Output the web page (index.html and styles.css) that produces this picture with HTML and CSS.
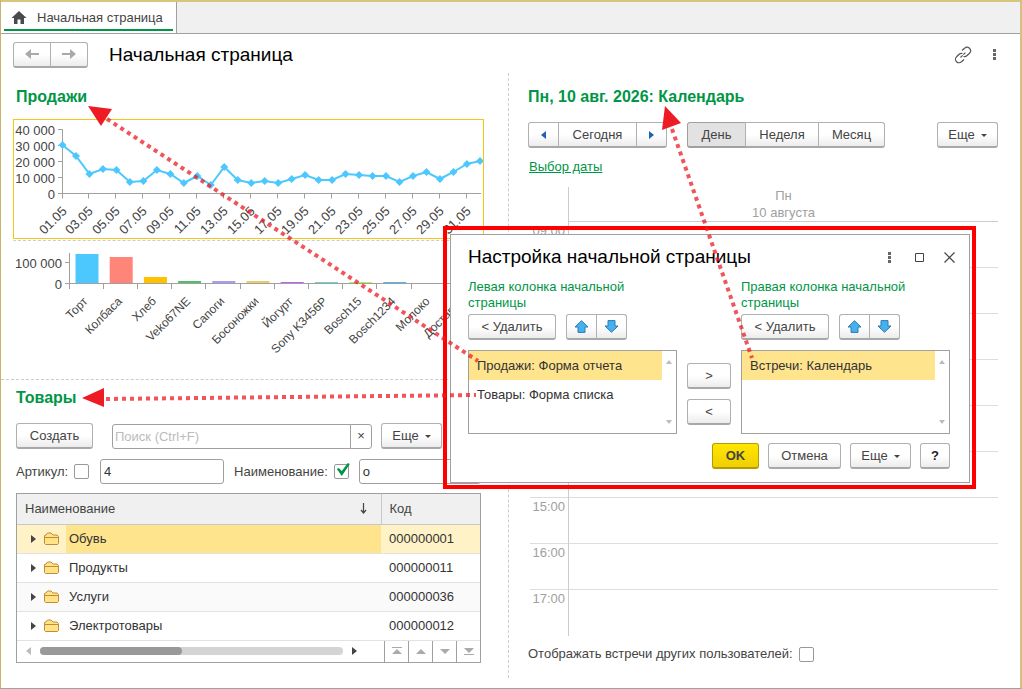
FILE: index.html
```html
<!DOCTYPE html>
<html lang="ru">
<head>
  <meta charset="UTF-8" />
  <title>Начальная страница</title>
  <link rel="stylesheet" href="styles.css">
</head>
<body>
  <div class="tabs">
    <a class="tab" href="#">
      <svg width="16" height="14" viewBox="0 0 16 14"><path fill="#4a4a4a" d="M8 0 L15.5 7 H13 V13 H9.500 V8.500 H6.500 V13 H3 V7 H0.500 Z"/></svg>
      Начальная страница
    </a>
  </div>

  <header class="header">
    <div class="group">
      <button class="btn nav" aria-label="Назад"><svg width="16" height="12" viewBox="0 0 16 12"><path fill="#a9a9a9" d="M1 6 L7 1 V5 H15 V7 H7 V11 Z"/></svg></button>
      <button class="btn nav" aria-label="Вперед"><svg width="16" height="12" viewBox="0 0 16 12"><path fill="#a9a9a9" d="M15 6 L9 1 V5 H1 V7 H9 V11 Z"/></svg></button>
    </div>
    <h1>Начальная страница</h1>
    <button class="icon" aria-label="Ссылка">
      <svg width="18" height="18" viewBox="0 0 18 18" fill="none" stroke="#555" stroke-width="1.200">
        <path d="M8 4.500 L10.500 2.300 A3.400 3.400 0 0 1 15.500 7.200 L12.800 9.800 A3.300 3.300 0 0 1 9.500 10.500"/>
        <path d="M10 13.500 L7.500 15.700 A3.400 3.400 0 0 1 2.500 10.800 L5.200 8.200 A3.300 3.300 0 0 1 8.500 7.500"/>
        <path d="M6.500 11.500 L11.500 6.500" stroke-dasharray="3 1"/>
      </svg>
    </button>
    <button class="icon dots" aria-label="Меню"><svg width="3" height="11"><path fill="#666" d="M0 0h3v3H0zM0 4h3v3H0zM0 8h3v3H0z"/></svg></button>
  </header>

  <main class="columns">
    <div class="left">
      <section class="sales">
        <h2>Продажи</h2>
        <svg id="lineChart" class="chart line"></svg>
        <svg id="barChart" class="chart bars"></svg>
      </section>

      <section class="goods">
        <h2>Товары</h2>
        <div class="toolbar">
          <button class="btn create">Создать</button>
          <div class="search">
            <input type="text" placeholder="Поиск (Ctrl+F)" aria-label="Поиск" />
            <button aria-label="Очистить">×</button>
          </div>
          <button class="btn more">Еще <i class="caret"></i></button>
        </div>
        <div class="filters">
          <label for="useArticle">Артикул:</label>
          <input type="checkbox" id="useArticle" />
          <input type="text" class="article" value="4" aria-label="Значение артикула" />
          <label for="useName">Наименование:</label>
          <input type="checkbox" id="useName" checked />
          <input type="text" class="title" value="о" aria-label="Значение наименования" />
        </div>
        <div class="grid">
          <table>
            <thead>
              <tr><th>Наименование <svg class="sort" width="7" height="11" viewBox="0 0 7 11"><path d="M3.500 0 V10 M1 7 L3.500 10 L6 7" fill="none" stroke="#444" stroke-width="1.200"/></svg></th><th>Код</th></tr>
            </thead>
            <tbody id="goodsRows"></tbody>
          </table>
          <div class="scroll">
            <i class="tri lt"></i>
            <div class="track"><div class="thumb"></div></div>
            <i class="tri rt"></i>
            <div class="pager">
              <button aria-label="В начало"><svg width="10" height="8"><path fill="#aaa" d="M0 0h10v1H0zM5 2l5 5H0z"/></svg></button>
              <button aria-label="Вверх"><svg width="10" height="8"><path fill="#aaa" d="M5 2l5 5H0z"/></svg></button>
              <button aria-label="Вниз"><svg width="10" height="8"><path fill="#aaa" d="M0 2h10l-5 5z"/></svg></button>
              <button aria-label="В конец"><svg width="10" height="8"><path fill="#aaa" d="M0 1h10l-5 5zM0 7h10v1H0z"/></svg></button>
            </div>
          </div>
        </div>
      </section>
    </div>

    <section class="right">
      <h2>Пн, 10 авг. 2026: Календарь</h2>
      <div class="toolbar">
        <div class="group">
          <button class="btn step" aria-label="Предыдущий день"><i class="tri lt"></i></button>
          <button class="btn today">Сегодня</button>
          <button class="btn step" aria-label="Следующий день"><i class="tri rt"></i></button>
        </div>
        <div class="group period">
          <button class="btn pressed">День</button>
          <button class="btn">Неделя</button>
          <button class="btn">Месяц</button>
        </div>
        <button class="btn more">Еще <i class="caret"></i></button>
      </div>
      <a class="pick" href="#">Выбор даты</a>
      <div class="calendar">
        <div class="day"><span>Пн</span><span>10 августа</span></div>
        <div class="hour"><span>09:00</span></div>
        <div class="hour"><span>10:00</span></div>
        <div class="hour"><span>11:00</span></div>
        <div class="hour"><span>12:00</span></div>
        <div class="hour"><span>13:00</span></div>
        <div class="hour"><span>14:00</span></div>
        <div class="hour"><span>15:00</span></div>
        <div class="hour"><span>16:00</span></div>
        <div class="hour"><span>17:00</span></div>
      </div>
      <div class="others">
        <label for="others">Отображать встречи других пользователей:</label>
        <input type="checkbox" id="others" />
      </div>
    </section>
  </main>

  <div class="frame">
    <div class="dialog" role="dialog" aria-labelledby="dialogTitle">
      <div class="dialog-head">
        <h3 id="dialogTitle">Настройка начальной страницы</h3>
        <button class="icon" aria-label="Меню"><svg width="3" height="11"><path fill="#666" d="M0 0h3v3H0zM0 4h3v3H0zM0 8h3v3H0z"/></svg></button>
        <button class="icon" aria-label="Развернуть"><svg width="9" height="9"><path fill="none" stroke="#444" d="M.5 .5h8v8h-8z"/></svg></button>
        <button class="icon" aria-label="Закрыть"><svg width="11" height="11"><path fill="none" stroke="#444" stroke-width="1.200" d="M.5 .5l10 10M10.500 .5l-10 10"/></svg></button>
      </div>
      <div class="lists">
        <div class="list-col">
          <p>Левая колонка начальной страницы</p>
          <div class="toolbar">
            <button class="btn remove">&lt; Удалить</button>
            <div class="group">
              <button class="btn move" aria-label="Выше"><svg width="15" height="13" viewBox="0 0 15 13"><path fill="#47b0ee" stroke="#2b7cb5" d="M7.500 .7 L14 7 H11 V12.400 H4 V7 H1 Z"/></svg></button>
              <button class="btn move" aria-label="Ниже"><svg width="15" height="13" viewBox="0 0 15 13"><path fill="#47b0ee" stroke="#2b7cb5" d="M7.500 12.300 L14 6 H11 V.6 H4 V6 H1 Z"/></svg></button>
            </div>
          </div>
          <ul class="list">
            <li class="selected">Продажи: Форма отчета</li>
            <li>Товары: Форма списка</li>
          </ul>
        </div>
        <div class="transfer">
          <button class="btn">&gt;</button>
          <button class="btn">&lt;</button>
        </div>
        <div class="list-col">
          <p>Правая колонка начальной страницы</p>
          <div class="toolbar">
            <button class="btn remove">&lt; Удалить</button>
            <div class="group">
              <button class="btn move" aria-label="Выше"><svg width="15" height="13" viewBox="0 0 15 13"><path fill="#47b0ee" stroke="#2b7cb5" d="M7.500 .7 L14 7 H11 V12.400 H4 V7 H1 Z"/></svg></button>
              <button class="btn move" aria-label="Ниже"><svg width="15" height="13" viewBox="0 0 15 13"><path fill="#47b0ee" stroke="#2b7cb5" d="M7.500 12.300 L14 6 H11 V.6 H4 V6 H1 Z"/></svg></button>
            </div>
          </div>
          <ul class="list">
            <li class="selected">Встречи: Календарь</li>
          </ul>
        </div>
      </div>
      <div class="dialog-foot">
        <button class="btn ok">OK</button>
        <button class="btn cancel">Отмена</button>
        <button class="btn more">Еще <i class="caret"></i></button>
        <button class="btn help">?</button>
      </div>
    </div>
  </div>

  <svg class="arrows" width="1022" height="689">
    <g stroke="#ed1c24" stroke-width="4" stroke-dasharray="4 4" opacity="0.750">
      <path d="M107 119 L478 361"/>
      <path d="M106 399 L476 395"/>
      <path d="M672 129 L752 358"/>
    </g>
    <g fill="#ed1c24">
      <path d="M88 106 L112 109 L101 126 Z"/>
      <path d="M82 398 L104 388 V407 Z"/>
      <path d="M665 106 L681 123 L662 130 Z"/>
    </g>
  </svg>

  <script>
    function el(parent, name, attrs, text) {
      const node = document.createElementNS("http://www.w3.org/2000/svg", name);
      for (const key in attrs) node.setAttribute(key, attrs[key]);
      if (text) node.textContent = text;
      parent.appendChild(node);
      return node;
    }

    // продажи по дням, y в координатах графика
    const days = [25, 36, 54, 49, 50, 62, 61, 50, 54, 63, 56, 65, 47, 60, 63, 61,
      63, 59, 55, 60, 60, 54, 55, 56, 56, 62, 56, 52, 59, 52, 44, 41];

    function drawLine() {
      const svg = document.getElementById("lineChart");
      const left = 48.5, step = 13.48, base = 73.5;
      el(svg, "path", { class: "axis", d: "M48.5 9 V78 M44 73.5 H467" });
      ["40 000", "30 000", "20 000", "10 000", "0"].forEach((label, i) => {
        const y = 9.5 + i * 16;
        el(svg, "path", { class: "axis", d: `M44 ${y} H48` });
        el(svg, "text", { x: 41, y: y + 5, "text-anchor": "end" }, label);
      });
      for (let i = 0; i < 16; i++) {
        const x = Math.round(left + i * 2 * step) - 0.5;
        const label = String(i * 2 + 1).padStart(2, "0") + ".05";
        el(svg, "path", { class: "axis", d: `M${x} ${base} v5` });
        el(svg, "text", { "text-anchor": "end", transform: `translate(${x + 5} 92) rotate(-45)` }, label);
      }
      const points = days.map((y, i) => [Math.min(left + i * step, 466), y]);
      el(svg, "polyline", { class: "series", points: points.join(" ") });
      points.forEach(([x, y]) => el(svg, "path", { fill: "#4dc8ff", d: `M${x} ${y - 4} l4 4 l-4 4 l-4 -4 z` }));
    }

    const products = [
      ["Торт", 29, "#4dc8ff"], ["Колбаса", 26, "#ff8578"], ["Хлеб", 6, "#ffc000"],
      ["Veko67NE", 2, "#4fc068"], ["Сапоги", 2, "#a39df5"], ["Босоножки", 2, "#edcb6b"],
      ["Йогурт", 1, "#c45cff"], ["Sony K3456P", 1, "#6ed3c4"], ["Bosch15", 1, "#b6f25c"],
      ["Bosch1234", 1, "#55b2f0"], ["Молоко", 0, "#ffffff"], ["Доставка", 0, "#ffffff"]
    ];

    function drawBars() {
      const svg = document.getElementById("barChart");
      const step = 34.2;
      el(svg, "path", { class: "axis", d: "M55.5 12 V47 M51 42.5 H467 M51 21.5 H55" });
      el(svg, "text", { x: 48, y: 27, "text-anchor": "end" }, "100 000");
      el(svg, "text", { x: 48, y: 48, "text-anchor": "end" }, "0");
      products.forEach(([name, h, color], i) => {
        const x = 55.5 + i * step;
        if (h) el(svg, "rect", { x: x + 6, y: 42 - h, width: 23, height: h, fill: color });
        el(svg, "path", { class: "axis", d: `M${Math.round(x) - 0.5} 43 v5` });
        el(svg, "text", { class: "name", "text-anchor": "end", transform: `translate(${x + 19} 61) rotate(-45)` }, name);
      });
    }

    const goods = [["Обувь", "000000001"], ["Продукты", "000000011"], ["Услуги", "000000036"], ["Электротовары", "000000012"]];
    const folder = '<svg class="folder" width="15" height="13" viewBox="0 0 15 13"><path fill="#ffe387" stroke="#c48a3a" d="M.5 11.5 V3.500 L2 3 L3.500 1 H7 L9 3 H13 L14.500 4.500 V11.500 L13.500 12.500 H1.500 Z"/><path fill="#f8d56f" stroke="#c48a3a" d="M.5 5.500 H14.500"/></svg>';
    document.getElementById("goodsRows").innerHTML = goods.map(([name, code], i) =>
      `<tr class="${i ? "" : "selected"}"><td><div class="cell"><span class="mark"><i class="tri rt"></i>${folder}</span><span class="text">${name}</span></div></td><td>${code}</td></tr>`
    ).join("");

    drawLine();
    drawBars();
  </script>
</body>
</html>
```
FILE: styles.css
```css
* {
  box-sizing: border-box;
}
body {
  margin: 0;
  min-height: 100vh;
  position: relative;
  display: flex;
  flex-direction: column;
  font: 13px/16px "Liberation Sans", Arial, sans-serif;
  color: #444;
  background: #fff;
  border-left: 1px solid #c8b46a;
  border-right: 2px solid #d3c27e;
  border-bottom: 1px solid #a0a0a0;
}
h1, h2, h3, p, ul {
  margin: 0;
  padding: 0;
}
button, input {
  font: inherit;
  color: inherit;
}
svg {
  display: block;
}

/* вкладки */
.tabs {
  height: 34px;
  background: #f0f0f0;
  border-top: 2px solid #d8c67c;
  border-bottom: 1px solid #a0a0a0;
  display: flex;
}
.tab {
  position: relative;
  display: flex;
  align-items: center;
  gap: 10px;
  padding: 0 13px 0 10px;
  background: #fff;
  border-right: 1px solid #a0a0a0;
  color: #444;
  text-decoration: none;
}
.tab::after {
  content: "";
  position: absolute;
  left: 3px;
  right: 3px;
  bottom: 2px;
  height: 2px;
  background: #009646;
}

.header {
  display: flex;
  align-items: center;
  height: 39px;
  padding: 2px 20px 0 12px;
}
h1, h3 {
  flex: 1;
  font-weight: normal;
  color: #000;
}
h1 {
  font-size: 19px;
  line-height: 24px;
  padding-left: 21px;
}
h2 {
  font-size: 16px;
  line-height: 22px;
  color: #009646;
}
.icon {
  display: flex;
  align-items: center;
  justify-content: center;
  width: 30px;
  height: 24px;
  padding: 0;
  border: 0;
  background: none;
}
.header .dots {
  width: 12px;
  margin-left: 10px;
}

/* кнопки */
.btn {
  height: 26px;
  padding: 0;
  display: inline-flex;
  align-items: center;
  justify-content: center;
  border: 1px solid #b0b0b0;
  border-bottom: 2px solid #a8a8a8;
  border-radius: 3px;
  background: linear-gradient(#fff 50%, #ececec);
}
.group {
  display: flex;
}
.group .btn {
  border-radius: 0;
}
.group .btn + .btn {
  margin-left: -1px;
}
.group .btn:first-child {
  border-radius: 3px 0 0 3px;
}
.group .btn:last-child {
  border-radius: 0 3px 3px 0;
}
.nav {
  width: 38px;
}
.more {
  width: 61px;
}
.caret {
  margin: 2px 0 0 6px;
  border: 3px solid transparent;
  border-top-color: #444;
  border-bottom: 0;
}
.tri {
  width: 0;
  height: 0;
  border: 4px solid transparent;
}
.tri.lt {
  border-right: 5px solid #bbb;
  border-left: 0;
}
.tri.rt {
  border-left: 5px solid #444;
  border-right: 0;
}
.toolbar {
  display: flex;
  align-items: center;
}

.columns {
  flex: 1;
  display: grid;
  grid-template-columns: minmax(0, 508fr) minmax(0, 511fr);
}
.left {
  border-right: 1px dashed #ccc;
  margin-bottom: 10px;
}

/* продажи */
.sales {
  padding: 13px 24px 0 12px;
  border-bottom: 1px dashed #ccc;
}
.sales h2 {
  padding-left: 3px;
}
.chart {
  width: 100%;
  overflow: hidden;
  font-size: 13px;
}
.chart text {
  fill: #444;
}
.chart .name {
  font-size: 12px;
}
.line {
  height: 120px;
  margin-top: 11px;
  border: 1px solid #f5c518;
}
.bars {
  height: 139px;
  margin-top: 1px;
  border-top: 1px dashed #ccc;
  border-left: 1px solid transparent;
}
.axis {
  fill: none;
  stroke: #a0a0a0;
}
.series {
  fill: none;
  stroke: #4dc8ff;
  stroke-width: 2;
}

/* товары */
.goods {
  padding: 7px 27px 0 15px;
}
.goods .toolbar {
  margin-top: 14px;
}
.create {
  width: 77px;
}
input[type="text"] {
  height: 25px;
  min-width: 0;
  padding: 0 3px;
  border: 1px solid #a0a0a0;
  border-radius: 3px;
  background: #fff;
  color: #333;
}
input::placeholder {
  color: #bbb;
}
.search {
  display: flex;
  width: 260px;
  margin: 0 9px 0 19px;
}
.search input[type="text"] {
  flex: 1;
  padding: 0 2px;
  border-radius: 3px 0 0 3px;
}
.search button {
  width: 22px;
  margin-left: -1px;
  padding: 0;
  border: 1px solid #a0a0a0;
  border-radius: 0 3px 3px 0;
  background: #fff;
}
.filters {
  display: flex;
  align-items: center;
  margin: 10px 0 9px;
}
input[type="checkbox"] {
  appearance: none;
  flex: none;
  position: relative;
  width: 15px;
  height: 15px;
  margin: 0 0 0 6px;
  border: 1px solid #999;
  border-radius: 2px;
  background: #fff;
}
input[type="checkbox"]:checked::before {
  content: "";
  position: absolute;
  left: 1px;
  top: -2px;
  width: 15px;
  height: 13px;
  background: #009646;
  clip-path: polygon(1px 6px, 3px 5px, 6px 8px, 12px 0, 14px 1px, 6px 13px);
}
.article {
  width: 124px;
  margin: 0 10px 0 11px;
}
.title {
  flex: 1;
  margin-left: 10px;
}
.grid {
  border: 1px solid #a0a0a0;
}
table {
  width: 100%;
  table-layout: fixed;
  border-collapse: collapse;
}
th, td {
  height: 29px;
  padding: 0 0 0 8px;
  text-align: left;
  font-weight: normal;
  border-bottom: 1px solid #e2e2e2;
}
th {
  height: 30px;
  background: #f0f0f0;
  border-bottom: 1px solid #c8c8c8;
}
th:last-child {
  width: 99px;
  border-left: 1px solid #c8c8c8;
}
td {
  color: #333;
}
td:first-child {
  padding: 0;
}
.sort {
  float: right;
  margin: 2px 14px 0 0;
}
tr:nth-child(odd) td {
  background: #fafafa;
}
tr.selected td {
  background: #fff2c6;
}
.cell {
  display: flex;
  height: 28px;
  line-height: 28px;
}
.mark {
  display: flex;
  align-items: center;
  gap: 8px;
  width: 49px;
  padding-left: 14px;
}
.text {
  flex: 1;
  padding-left: 3px;
}
.selected .text {
  background: #ffe48e;
}
.scroll {
  display: flex;
  align-items: center;
  height: 21px;
  padding-left: 9px;
}
.track {
  flex: 1;
  height: 8px;
  margin: 0 9px;
  border-radius: 4px;
  background: #d4d4d4;
}
.thumb {
  width: 47%;
  height: 8px;
  border-radius: 4px;
  background: #999;
}
.pager {
  display: flex;
  align-self: stretch;
  margin-left: 27px;
}
.pager button {
  width: 24px;
  display: flex;
  align-items: center;
  justify-content: center;
  padding: 0;
  border: 0;
  border-left: 1px solid #a0a0a0;
  background: #fff;
}

/* календарь */
.right {
  padding: 13px 22px 0 19px;
}
.right .toolbar {
  margin-top: 14px;
}
.step {
  width: 31px;
}
.step .tri.lt {
  border-right-color: #1f5fb4;
}
.step .tri.rt {
  border-left-color: #1f5fb4;
}
.today {
  width: 79px;
}
.period {
  margin: 0 auto 0 20px;
}
.period .btn {
  width: 67px;
}
.period .btn:nth-child(1) {
  width: 59px;
}
.period .btn:nth-child(2) {
  width: 74px;
}
.period .pressed {
  background: #e2e2e2;
  border-color: #a0a0a0;
}
.pick {
  display: block;
  width: max-content;
  margin: 11px 0 12px 1px;
  color: #009646;
}
.calendar {
  color: #a0a0a0;
}
.day {
  display: flex;
  flex-direction: column;
  align-items: center;
  height: 35px;
  margin-left: 40px;
  line-height: 17px;
  border-left: 1px solid #ccc;
  border-bottom: 1px solid #ccc;
}
.hour {
  height: 46px;
  margin-left: 2px;
  border-bottom: 1px solid #ddd;
}
.hour:last-child {
  border-bottom: 0;
}
.hour span {
  display: block;
  width: 39px;
  height: 46px;
  padding: 1px 3px 0 0;
  text-align: right;
  border-right: 1px solid #ccc;
}
.others {
  display: flex;
  align-items: center;
  margin-top: 10px;
}

/* окно настройки поверх страницы */
.frame {
  position: absolute;
  left: 442px;
  top: 226px;
  width: 533px;
  padding: 4px 2px 2px 3px;
  border: 4px solid #f00;
}
.dialog {
  padding: 8px 19px 13px 17px;
  border: 1px solid #a0a0a0;
  background: #fff;
}
.dialog-head {
  display: flex;
  align-items: center;
  height: 28px;
  margin-right: -14px;
}
h3 {
  font-size: 19px;
  line-height: 24px;
}
.lists {
  display: grid;
  grid-template-columns: 1fr 44px 1fr;
  gap: 10px;
  margin-top: 8px;
}
.list-col p {
  color: #009646;
  padding-right: 30px;
}
.list-col .toolbar {
  gap: 10px;
  margin: 3px 0 10px;
}
.remove {
  width: 88px;
}
.move {
  width: 31px;
}
.list {
  position: relative;
  height: 84px;
  padding-right: 14px;
  border: 1px solid #a0a0a0;
  list-style: none;
}
.list li {
  height: 29px;
  padding-left: 8px;
  line-height: 29px;
  color: #333;
}
.list .selected {
  background: #ffe48e;
}
.list::before, .list::after {
  content: "";
  position: absolute;
  right: 4px;
  border: 3px solid transparent;
}
.list::before {
  top: 9px;
  border-bottom: 4px solid #bbb;
  border-top: 0;
}
.list::after {
  bottom: 9px;
  border-top: 4px solid #bbb;
  border-bottom: 0;
}
.transfer {
  display: flex;
  flex-direction: column;
  justify-content: flex-end;
  gap: 10px;
  padding-bottom: 9px;
}
.dialog-foot {
  display: flex;
  justify-content: flex-end;
  gap: 9px;
  margin-top: 9px;
}
.ok {
  width: 47px;
  font-weight: bold;
  background: linear-gradient(#ffe600, #f0cf00);
  border-color: #b39b00;
}
.cancel {
  width: 73px;
}
.help {
  width: 30px;
  font-weight: bold;
  color: #222;
}

.arrows {
  position: absolute;
  left: -1px;
  top: 0;
  pointer-events: none;
}
```
